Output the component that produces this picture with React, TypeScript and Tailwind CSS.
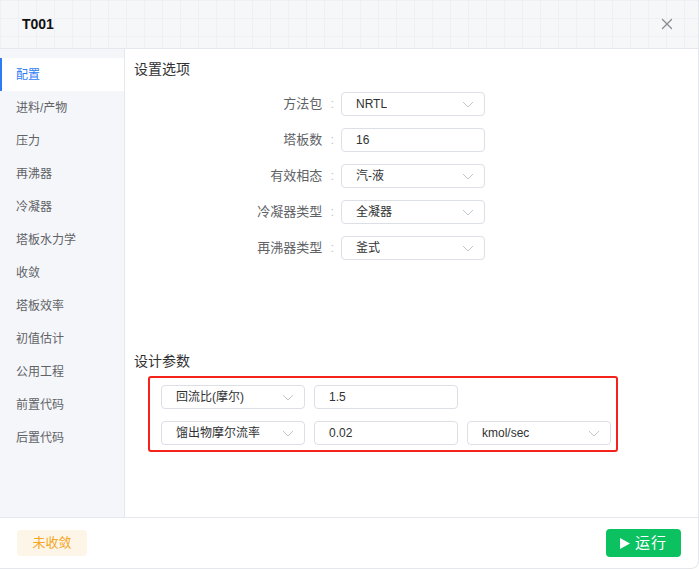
import { X } from 'lucide-react';

const menu = [
  '配置',
  '进料/产物',
  '压力',
  '再沸器',
  '冷凝器',
  '塔板水力学',
  '收敛',
  '塔板效率',
  '初值估计',
  '公用工程',
  '前置代码',
  '后置代码',
];

// 下拉箭头
function Chevron() {
  return (
    <svg width="12" height="7" viewBox="0 0 12 7" fill="none" className="shrink-0">
      <path d="M1 1l5 5 5-5" stroke="#c0c4cc" strokeWidth="1" />
    </svg>
  );
}

function SelectBox({ value }: { value: string }) {
  return (
    <div className="w-[144px] h-[24px] border border-[#dcdfe6] rounded-[4px] bg-white flex items-center justify-between pl-[14px] pr-[10px]">
      <span className="text-[12px] text-[#303133] truncate">{value}</span>
      <Chevron />
    </div>
  );
}

function InputBox({ value }: { value: string }) {
  return (
    <div className="w-[144px] h-[24px] border border-[#dcdfe6] rounded-[4px] bg-white flex items-center pl-[14px]">
      <span className="text-[12px] text-[#303133]">{value}</span>
    </div>
  );
}

function FormRow({ label, children }: { label: string; children: React.ReactNode }) {
  return (
    <div className="flex items-center">
      <div className="w-[202px] text-right text-[13px] text-[#606266]">
        {label}
        <span className="ml-[8px] mr-[2px] text-[#c0c4cc]">:</span>
      </div>
      <div className="ml-[5px]">{children}</div>
    </div>
  );
}

export default function App() {
  return (
    <div
      className="w-[699px] h-[569px] border-b border-r border-[#e4e7ed] rounded-br-[8px] overflow-hidden flex flex-col bg-white"
      style={{ fontFamily: '"Liberation Sans", "Noto Sans CJK SC", sans-serif' }}
    >
      {/* ヘッダー */}
      <div className="h-[49px] shrink-0 border-b border-[#e4e7ed] bg-[#f6f7f9] bg-[image:linear-gradient(to_right,#eff0f3_1px,transparent_1px),linear-gradient(to_bottom,#eff0f3_1px,transparent_1px)] bg-size-[18px_18px] flex items-center justify-between pl-[22px] pr-[22px]">
        <span className="text-[14px] font-bold text-[#111]">T001</span>
        <X size={18} strokeWidth={1.8} className="text-[#8a8d93]" />
      </div>

      <div className="flex flex-1 min-h-0">
        {/* サイドメニュー */}
        <div className="w-[125px] shrink-0 bg-[#f5f6fa] border-r border-[#e4e7ed] pt-[9px]">
          {menu.map((item, i) => (
            <div
              key={item}
              className={
                i === 0
                  ? 'h-[33px] flex items-center pl-[14px] border-l-2 border-[#2f7bf5] bg-white text-[12px] text-[#2f7bf5]'
                  : 'h-[33px] flex items-center pl-[16px] text-[12px] text-[#606266]'
              }
            >
              {item}
            </div>
          ))}
        </div>

        {/* 本体 */}
        <div className="flex-1 pl-[9px] pt-[10px]">
          <div className="text-[14px] leading-[20px] text-[#303133]">设置选项</div>
          <div className="mt-[13px] flex flex-col gap-[12px]">
            <FormRow label="方法包">
              <SelectBox value="NRTL" />
            </FormRow>
            <FormRow label="塔板数">
              <InputBox value="16" />
            </FormRow>
            <FormRow label="有效相态">
              <SelectBox value="汽-液" />
            </FormRow>
            <FormRow label="冷凝器类型">
              <SelectBox value="全凝器" />
            </FormRow>
            <FormRow label="再沸器类型">
              <SelectBox value="釜式" />
            </FormRow>
          </div>

          <div className="mt-[91px] text-[14px] leading-[20px] text-[#303133]">设计参数</div>
          <div className="mt-[5px] ml-[14px] w-[470px] border-2 border-[#f5221b] rounded-[3px] pl-[11px] pt-[7px] pb-[5px] flex flex-col gap-[12px]">
            <div className="flex gap-[9px]">
              <SelectBox value="回流比(摩尔)" />
              <InputBox value="1.5" />
            </div>
            <div className="flex gap-[9px]">
              <SelectBox value="馏出物摩尔流率" />
              <InputBox value="0.02" />
              <SelectBox value="kmol/sec" />
            </div>
          </div>
        </div>
      </div>

      {/* フッター */}
      <div className="h-[51px] shrink-0 border-t border-[#e4e7ed] flex items-center justify-between pl-[17px] pr-[17px]">
        <div className="w-[70px] h-[26px] rounded-[4px] bg-[#fdf5e8] flex items-center justify-center text-[13px] text-[#f5a524]">
          未收敛
        </div>
        <button className="w-[75px] h-[28px] rounded-[4px] bg-[#0bc160] flex items-center justify-center gap-[5px] text-[15px] tracking-[1px] text-white">
          <svg width="10" height="11" viewBox="0 0 10 11">
            <path d="M0 0l10 5.5-10 5.5z" fill="white" />
          </svg>
          运行
        </button>
      </div>
    </div>
  );
}
